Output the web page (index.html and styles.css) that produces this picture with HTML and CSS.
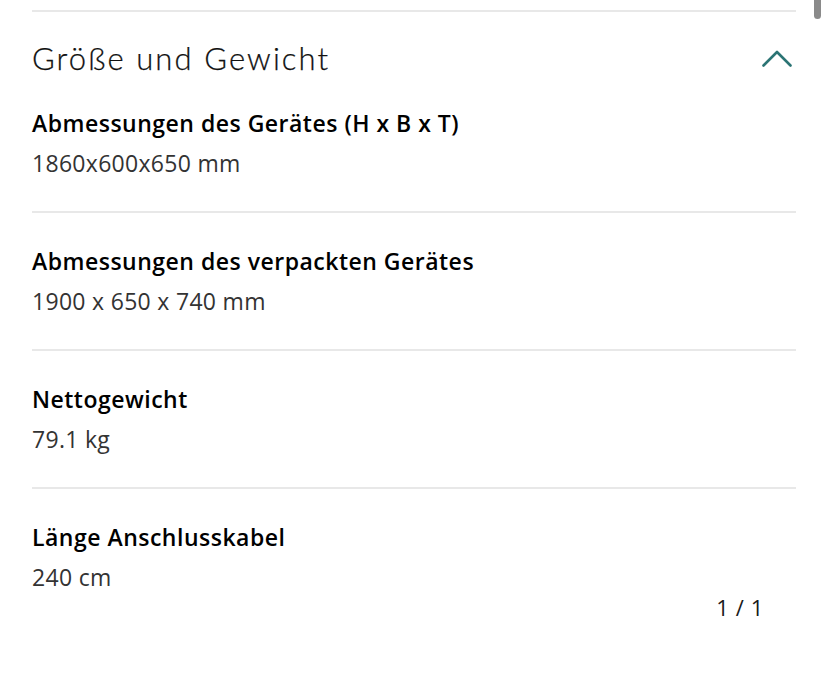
FILE: index.html
```html
<!DOCTYPE html>
<html lang="de">
<head>
<meta charset="utf-8">
<title>Größe und Gewicht</title>
<link rel="stylesheet" href="styles.css">
</head>
<body>
<div class="scrollbar"></div>
<main class="panel">
  <section class="accordion">
    <div class="acc-head">
      <h2 class="acc-title">Größe und Gewicht</h2>
      <svg class="chevron" width="30" height="18" viewBox="0 0 30 18" aria-hidden="true">
        <polyline points="1.5,15.5 15,2 28.5,15.5" fill="none" stroke="#2b7474" stroke-width="2.6" stroke-linecap="round" stroke-linejoin="round"/>
      </svg>
    </div>
    <dl class="specs">
      <div class="spec">
        <dt class="spec-label">Abmessungen des Gerätes (H x B x T)</dt>
        <dd class="spec-value">1860x600x650 mm</dd>
      </div>
      <div class="spec">
        <dt class="spec-label">Abmessungen des verpackten Gerätes</dt>
        <dd class="spec-value">1900 x 650 x 740 mm</dd>
      </div>
      <div class="spec">
        <dt class="spec-label">Nettogewicht</dt>
        <dd class="spec-value">79.1 kg</dd>
      </div>
      <div class="spec spec-last">
        <dt class="spec-label">Länge Anschlusskabel</dt>
        <dd class="spec-value">240 cm</dd>
      </div>
    </dl>
    <div class="pager">1 / 1</div>
  </section>
</main>
</body>
</html>
```

FILE: styles.css
```css
* { box-sizing: border-box; }
html, body { margin: 0; padding: 0; background: #ffffff; }
body {
  font-family: "Open Sans", "Noto Sans", sans-serif;
  color: #000;
  width: 828px;
  height: 681px;
  overflow: hidden;
  position: relative;
}
.scrollbar {
  position: absolute;
  top: -6px;
  left: 814px;
  width: 7px;
  height: 25px;
  border-radius: 4px;
  background: #8a8a8a;
}
.panel {
  padding: 0 32px;
}
.accordion {
  margin-top: 10px;
  border-top: 2px solid #e8e8e8;
}
.acc-head {
  display: flex;
  align-items: center;
  justify-content: space-between;
  padding-top: 29px;
  height: 62px;
}
.acc-title {
  margin: 0;
  font-family: "Lato", "Open Sans", sans-serif;
  font-weight: 300;
  font-size: 31px;
  line-height: 40px;
  color: #111;
  letter-spacing: 2.1px;
  -webkit-text-stroke: 0.25px #111;
}
.chevron {
  margin-right: 4px;
  margin-top: 3px;
}
.specs { margin: 0; padding: 0; }
.spec {
  padding: 28px 0 28px;
  border-bottom: 2px solid #e8e8e8;
}
.spec:first-child { padding-top: 29px; }
.spec-last { border-bottom: none; padding-bottom: 0; }
.spec-label {
  margin: 0;
  font-size: 23px;
  line-height: 40px;
  font-weight: 600;
  color: #000;
  letter-spacing: 0.5px;
}
.spec-value {
  margin: 0;
  font-size: 23px;
  line-height: 40px;
  font-weight: 400;
  color: #333;
  letter-spacing: 0.3px;
}
.pager {
  text-align: right;
  padding-right: 32px;
  font-size: 22px;
  line-height: 30px;
  color: #1a1a1a;
  letter-spacing: 0.6px;
  margin-top: -5px;
}
```
